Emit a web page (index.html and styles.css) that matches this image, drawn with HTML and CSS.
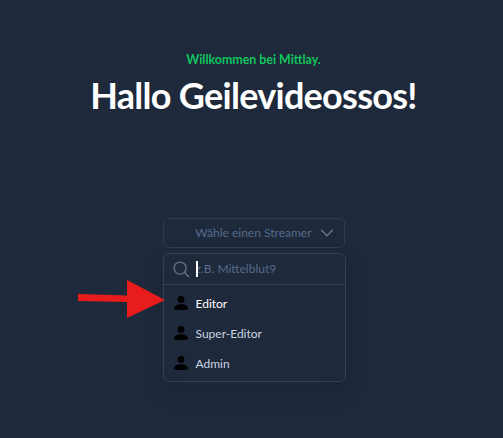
FILE: index.html
```html
<!DOCTYPE html>
<html lang="de">
<head>
<meta charset="utf-8">
<title>Mittlay</title>
<link rel="stylesheet" href="styles.css">
</head>
<body>
<main class="page">
  <header class="hero">
    <p class="welcome">Willkommen bei Mittlay.</p>
    <h1 class="title">Hallo Geilevideossos!</h1>
  </header>
  <section class="picker">
    <button class="select" type="button">
      <span>Wähle einen Streamer</span>
      <svg class="chevron" viewBox="0 0 20 20" width="18" height="18" fill="none" stroke="currentColor" stroke-width="1.6" stroke-linecap="round" stroke-linejoin="round"><path d="M4 7l6 6 6-6"/></svg>
    </button>
    <div class="panel">
      <div class="search">
        <svg class="search-icon" viewBox="0 0 20 20" width="18" height="18" fill="none" stroke="currentColor" stroke-width="1.5" stroke-linecap="round"><circle cx="9" cy="9" r="6.7"/><path d="M14 14l4.500 4.500"/></svg>
        <span class="query"><span class="caret"></span><span class="placeholder">z.B. Mittelblut9</span></span>
      </div>
      <ul class="roles">
        <li class="role role-active"><svg class="avatar" viewBox="0 0 14 14" width="14" height="14"><circle cx="7" cy="3.400" r="3.400"/><path d="M0 13.200c0-3.300 2.800-4.900 7-4.900s7 1.600 7 4.900c-2 1-12 1-14 0z"/></svg>Editor</li>
        <li class="role"><svg class="avatar" viewBox="0 0 14 14" width="14" height="14"><circle cx="7" cy="3.400" r="3.400"/><path d="M0 13.200c0-3.300 2.800-4.900 7-4.900s7 1.600 7 4.900c-2 1-12 1-14 0z"/></svg>Super-Editor</li>
        <li class="role"><svg class="avatar" viewBox="0 0 14 14" width="14" height="14"><circle cx="7" cy="3.400" r="3.400"/><path d="M0 13.200c0-3.300 2.800-4.900 7-4.900s7 1.600 7 4.900c-2 1-12 1-14 0z"/></svg>Admin</li>
      </ul>
    </div>
    <svg class="arrow" viewBox="0 0 87 38" width="87" height="38"><path d="M0 14L49 15.500 49 0 87 20 49 38 49 22 0 21z"/></svg>
  </section>
</main>
</body>
</html>
```
FILE: styles.css
```css
* { box-sizing: border-box; }
html, body { margin: 0; height: 100%; }
body {
  background: #1e293b;
  font-family: Lato, "Liberation Sans", sans-serif;
  overflow: hidden;
}
.page {
  display: flex;
  flex-direction: column;
  align-items: center;
  padding-top: 52px;
  padding-left: 4px;
}
.hero { text-align: center; }
.welcome {
  margin: 0;
  font-size: 12.400px;
  line-height: 16px;
  font-weight: 700;
  color: #10c55e;
}
.title {
  margin: 2px 0 0;
  font-size: 36px;
  line-height: 50px;
  font-weight: 700;
  letter-spacing: -0.72px;
  color: #fff;
}
.picker {
  position: relative;
  width: 183px;
  margin-top: 98px;
  margin-left: 1px;
}
.select {
  display: flex;
  align-items: center;
  justify-content: flex-end;
  gap: 6px;
  width: 182px;
  height: 30px;
  padding: 0 8px 0 0;
  background: transparent;
  border: 1px solid #2f3b4e;
  border-radius: 5px;
  font: 12px/16px Lato, sans-serif;
  color: #566a8c;
}
.chevron { color: #64748b; }
.panel {
  margin-top: 5px;
  background: #1e293b;
  border: 1px solid #333f52;
  border-radius: 6px;
  box-shadow: 0 10px 20px rgba(15, 23, 42, 0.2);
}
.search {
  display: flex;
  align-items: center;
  gap: 6px;
  height: 31px;
  padding-left: 8px;
  border-bottom: 1px solid #333f52;
}
.search-icon { color: #64748b; flex: none; }
.query { position: relative; display: flex; align-items: center; }
.caret {
  position: absolute;
  left: 0;
  top: 0;
  width: 2px;
  height: 16px;
  background: #fff;
}
.placeholder {
  font-size: 12px;
  line-height: 16px;
  color: #566a8c;
}
.roles {
  list-style: none;
  margin: 0;
  padding: 3px 0 2px;
}
.role {
  display: flex;
  align-items: center;
  gap: 8px;
  height: 30.200px;
  padding-left: 10px;
  font-size: 12px;
  font-weight: 400;
  color: #cbd5e1;
}
.role-active { color: #fff; }
.avatar { flex: none; fill: #000; }
.arrow {
  position: absolute;
  left: -85px;
  top: 62px;
  fill: #e81c1c;
}
```
